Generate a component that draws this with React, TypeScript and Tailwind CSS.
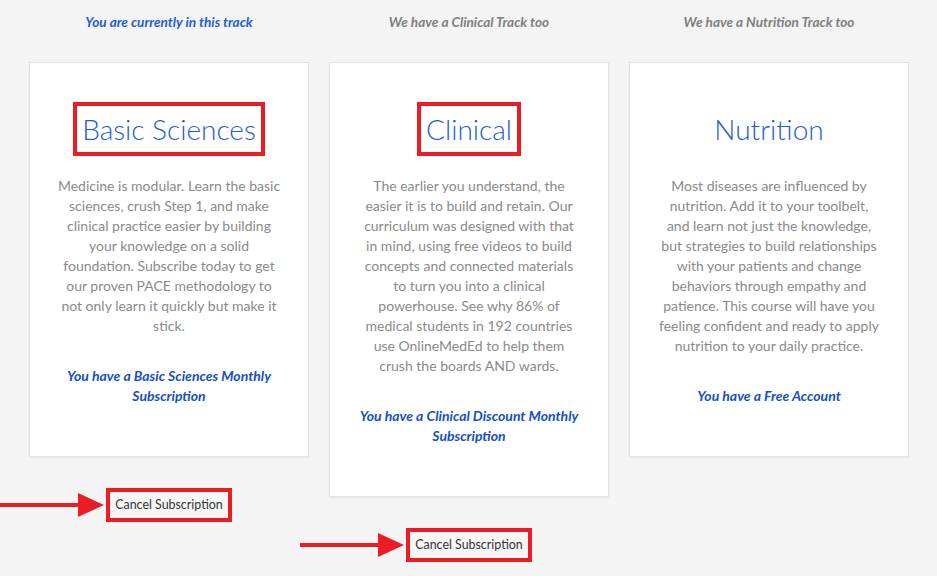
import React from "react";

const tracks = [
  {
    label: "You are currently in this track",
    current: true,
    title: "Basic Sciences",
    marked: true,
    body: "Medicine is modular. Learn the basic sciences, crush Step 1, and make clinical practice easier by building your knowledge on a solid foundation. Subscribe today to get our proven PACE methodology to not only learn it quickly but make it stick.",
    status: "You have a Basic Sciences Monthly Subscription",
    cancel: true,
  },
  {
    label: "We have a Clinical Track too",
    current: false,
    title: "Clinical",
    marked: true,
    body: "The earlier you understand, the easier it is to build and retain. Our curriculum was designed with that in mind, using free videos to build concepts and connected materials to turn you into a clinical powerhouse. See why 86% of medical students in 192 countries use OnlineMedEd to help them crush the boards AND wards.",
    status: "You have a Clinical Discount Monthly Subscription",
    cancel: true,
  },
  {
    label: "We have a Nutrition Track too",
    current: false,
    title: "Nutrition",
    marked: false,
    body: "Most diseases are influenced by nutrition. Add it to your toolbelt, and learn not just the knowledge, but strategies to build relationships with your patients and change behaviors through empathy and patience. This course will have you feeling confident and ready to apply nutrition to your daily practice.",
    status: "You have a Free Account",
    cancel: false,
  },
];

const Arrow = () => (
  <svg
    className="absolute top-1/2 right-[calc(100%+4px)] -translate-y-1/2"
    width="106"
    height="26"
    viewBox="0 0 106 26"
  >
    <rect x="0" y="11" width="82" height="4" fill="#ec1c24" />
    <polygon points="78,1 104,13 78,25" fill="#ec1c24" />
  </svg>
);

export default function App() {
  return (
    <div className="min-h-screen w-full bg-[#f4f4f4] font-['Lato',sans-serif] overflow-hidden">
      <div className="flex gap-5 pl-[29px] pt-[13px]">
        {tracks.map((t) => (
          <div key={t.title} className="flex w-[280px] flex-col items-center">
            <div
              className={`text-[13.6px] font-bold italic leading-[18px] ${
                t.current ? "text-[#1d5ed6]" : "text-[#7f7f7f]"
              }`}
            >
              {t.label}
            </div>
            <div className="mt-[31px] flex w-full flex-col items-center border border-[#e4e4e4] bg-white px-[27px] pt-[39px] pb-[50px] shadow-[0_1px_2px_rgba(0,0,0,0.05)]">
              <div
                className={`border-4 px-[5px] py-[2px] ${
                  t.marked ? "border-[#ec1c24]" : "border-transparent"
                }`}
              >
                <h2 className="text-[28px] font-light leading-[42px] text-[#1c5dd3]">
                  {t.title}
                </h2>
              </div>
              <p className="mt-5 text-center text-[14px] leading-[20px] text-[#8a8a8a]">
                {t.body}
              </p>
              <p className="mt-[30px] text-center text-[14px] font-bold italic leading-[20px] text-[#1550c4]">
                {t.status}
              </p>
            </div>
            {t.cancel && (
              <div className="relative mt-[31px] border-4 border-[#ec1c24] bg-[#f6f6f6] px-[5px] py-[4px] text-[12.4px] leading-[18px] text-[#333]">
                <Arrow />
                Cancel Subscription
              </div>
            )}
          </div>
        ))}
      </div>
    </div>
  );
}
